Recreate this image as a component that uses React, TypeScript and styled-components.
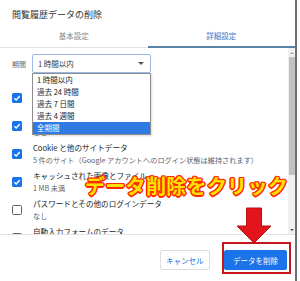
import React from 'react';
import styled, { createGlobalStyle } from 'styled-components';

const GlobalStyle = createGlobalStyle`
    html, body {
        margin: 0;
        padding: 0;
        background: #ffffff;
    }
    body {
        font-family: "Noto Sans CJK JP", "Noto Sans", sans-serif;
        color: #202124;
    }
`;

const Page = styled.div`
    position: relative;
    width: 300px;
    height: 281px;
    display: flex;
    overflow: hidden;
    background: #ffffff;
`;

const Dialog = styled.div`
    flex: 1;
    display: flex;
    flex-direction: column;
    min-width: 0;
`;

const WindowEdge = styled.div`
    width: 2px;
    background: #6d6d6d;
`;

const Outside = styled.div`
    width: 3px;
    background: #fafafa;
`;

const Title = styled.div`
    height: 24px;
    box-sizing: border-box;
    padding: 9px 0 0 12px;
    font-size: 9px;
    line-height: 12px;
    color: #303030;
`;

const Tabs = styled.div`
    display: flex;
    align-items: flex-end;
    height: 24px;
`;

const Tab = styled.div<{ active?: boolean }>`
    flex: 1;
    height: 23px;
    box-sizing: border-box;
    padding-top: 5px;
    text-align: center;
    font-size: 7.5px;
    line-height: 12px;
    color: ${p => (p.active ? '#3a78c4' : '#8a8a8a')};
    border-bottom: ${p => (p.active ? '2px solid #5a83a8' : '1px solid #e2e2e2')};
`;

const Body = styled.div`
    height: 186px;
    display: flex;
    overflow: hidden;
`;

const Content = styled.div`
    position: relative;
    flex: 1;
    overflow: hidden;
`;

const PeriodRow = styled.div`
    display: flex;
    align-items: center;
    padding: 6px 0 0 12px;
    margin-bottom: 11px;
`;

const PeriodLabel = styled.span`
    width: 20px;
    font-size: 7px;
    color: #666;
`;

const Select = styled.div`
    width: 119px;
    height: 19px;
    box-sizing: border-box;
    display: flex;
    align-items: center;
    justify-content: space-between;
    padding: 0 6px 0 5px;
    border: 1px solid #9dbbe2;
    border-radius: 2px;
    font-size: 7.5px;
    color: #333;
`;

const Caret = styled.span`
    width: 0;
    height: 0;
    border-left: 3px solid transparent;
    border-right: 3px solid transparent;
    border-top: 3px solid #555;
`;

const Dropdown = styled.div`
    position: absolute;
    top: 25px;
    left: 32px;
    width: 119px;
    box-sizing: border-box;
    border: 1px solid #8e8e8e;
    background: #ffffff;
    box-shadow: 1px 1px 2px rgba(0, 0, 0, 0.15);
    z-index: 2;
`;

const Option = styled.div<{ selected?: boolean }>`
    height: 12px;
    padding-left: 4px;
    font-size: 7.5px;
    line-height: 12px;
    color: ${p => (p.selected ? '#ffffff' : '#222')};
    background: ${p => (p.selected ? '#2f7be3' : 'transparent')};
`;

const Row = styled.div`
    display: flex;
    align-items: center;
    height: 28px;
    padding-left: 12px;
`;

const Checkbox = styled.div<{ checked?: boolean }>`
    width: 10px;
    height: 10px;
    box-sizing: border-box;
    margin-right: 11px;
    border-radius: 1.5px;
    display: flex;
    align-items: center;
    justify-content: center;
    background: ${p => (p.checked ? '#1a73e8' : '#ffffff')};
    border: ${p => (p.checked ? 'none' : '1.5px solid #5f6368')};
`;

const RowText = styled.div`
    display: flex;
    flex-direction: column;
    white-space: nowrap;
`;

const RowLabel = styled.span`
    font-size: 7.6px;
    line-height: 12px;
    color: #202124;
`;

const RowSub = styled.span`
    font-size: 7.2px;
    line-height: 12px;
    color: #5f6368;
`;

const Scrollbar = styled.div`
    width: 7px;
    display: flex;
    flex-direction: column;
    background: #f1f1f1;
`;

const ScrollButton = styled.div<{ down?: boolean }>`
    height: 9px;
    display: flex;
    align-items: center;
    justify-content: center;
    &::after {
        content: '';
        border-left: 2px solid transparent;
        border-right: 2px solid transparent;
        ${p => (p.down ? 'border-top: 2px solid #505050;' : 'border-bottom: 2px solid #a0a0a0;')}
    }
`;

const Track = styled.div`
    flex: 1;
    padding: 0 0.5px;
`;

const Thumb = styled.div`
    height: 118px;
    background: #c1c1c1;
`;

const Footer = styled.div`
    flex: 1;
    display: flex;
    justify-content: flex-end;
    align-items: flex-start;
    gap: 14px;
    padding: 15px 8px 0 0;
    border-top: 1px solid #e3e3e3;
`;

const Button = styled.div<{ primary?: boolean }>`
    height: 20px;
    box-sizing: border-box;
    padding: 0 ${p => (p.primary ? '8px' : '5.5px')};
    display: flex;
    align-items: center;
    border-radius: 2px;
    font-size: 7.5px;
    color: ${p => (p.primary ? '#ffffff' : '#1a73e8')};
    background: ${p => (p.primary ? '#1a73e8' : '#ffffff')};
    border: 1px solid ${p => (p.primary ? '#1a73e8' : '#dadce0')};
`;

const Callout = styled.div`
    position: absolute;
    left: 85px;
    top: 173px;
    font-size: 20px;
    line-height: 26px;
    font-weight: 700;
    letter-spacing: 0.3px;
    white-space: nowrap;
    color: #ffe100;
    text-shadow:
        1.5px 0 0 #ff2a00, -1.5px 0 0 #ff2a00, 0 1.5px 0 #ff2a00, 0 -1.5px 0 #ff2a00,
        1px 1px 0 #ff2a00, -1px -1px 0 #ff2a00, 1px -1px 0 #ff2a00, -1px 1px 0 #ff2a00;
    z-index: 3;
`;

const Arrow = styled.svg`
    position: absolute;
    left: 236px;
    top: 207px;
    z-index: 3;
`;

const Highlight = styled.div`
    position: absolute;
    left: 222px;
    top: 242px;
    width: 69px;
    height: 32px;
    box-sizing: border-box;
    border: 2px solid #c8161d;
    z-index: 3;
`;

const Check = () => (
    <svg width="8" height="8" viewBox="0 0 8 8">
        <path d="M1.3 4.2 L3.2 6 L6.8 2" fill="none" stroke="#fff" strokeWidth="1.3" />
    </svg>
);

const options = ['1 時間以内', '過去 24 時間', '過去 7 日間', '過去 4 週間', '全期間'];

const items = [
    { label: '閲覧履歴', sub: 'なし', checked: true },
    { label: 'ダウンロード', sub: 'なし', checked: true },
    { label: 'Cookie と他のサイトデータ', sub: '5 件のサイト（Google アカウントへのログイン状態は維持されます）', checked: true },
    { label: 'キャッシュされた画像とファイル', sub: '1 MB 未満', checked: true },
    { label: 'パスワードとその他のログインデータ', sub: 'なし', checked: false },
    { label: '自動入力フォームのデータ', sub: 'なし', checked: false },
];

export default function App() {
    return (
        <>
            <GlobalStyle />
            <Page>
                <Dialog>
                    <Title>閲覧履歴データの削除</Title>
                    <Tabs>
                        <Tab>基本設定</Tab>
                        <Tab active>詳細設定</Tab>
                    </Tabs>
                    <Body>
                        <Content>
                            <PeriodRow>
                                <PeriodLabel>期間</PeriodLabel>
                                <Select>
                                    <span>1 時間以内</span>
                                    <Caret />
                                </Select>
                            </PeriodRow>
                            <Dropdown>
                                {options.map((o, i) => (
                                    <Option key={o} selected={i === options.length - 1}>{o}</Option>
                                ))}
                            </Dropdown>
                            {items.map(item => (
                                <Row key={item.label}>
                                    <Checkbox checked={item.checked}>{item.checked && <Check />}</Checkbox>
                                    <RowText>
                                        <RowLabel>{item.label}</RowLabel>
                                        <RowSub>{item.sub}</RowSub>
                                    </RowText>
                                </Row>
                            ))}
                        </Content>
                        <Scrollbar>
                            <ScrollButton />
                            <Track><Thumb /></Track>
                            <ScrollButton down />
                        </Scrollbar>
                    </Body>
                    <Footer>
                        <Button>キャンセル</Button>
                        <Button primary>データを削除</Button>
                    </Footer>
                </Dialog>
                <WindowEdge />
                <Outside />
                <Callout>データ削除をクリック</Callout>
                <Arrow width="36" height="37" viewBox="0 0 36 37">
                    <path d="M10.5 1 H25.5 V19 H35 L18 36 L1 19 H10.5 Z" fill="#e3151c" stroke="#b80e14" strokeWidth="1" />
                </Arrow>
                <Highlight />
            </Page>
        </>
    );
}
